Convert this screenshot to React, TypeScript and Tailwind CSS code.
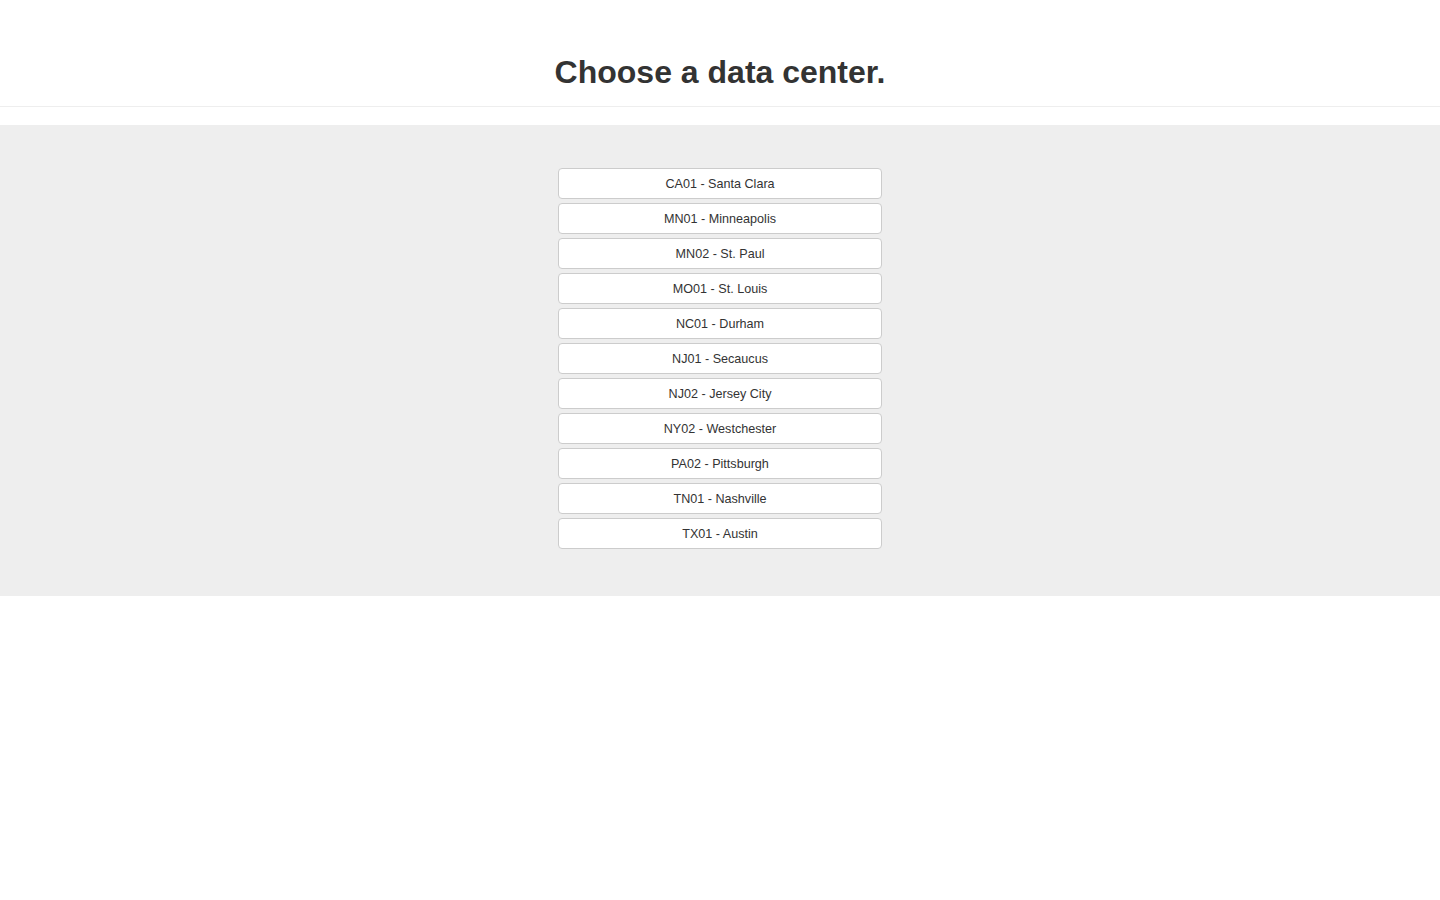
import React from "react";

const centers = [
  "CA01 - Santa Clara",
  "MN01 - Minneapolis",
  "MN02 - St. Paul",
  "MO01 - St. Louis",
  "NC01 - Durham",
  "NJ01 - Secaucus",
  "NJ02 - Jersey City",
  "NY02 - Westchester",
  "PA02 - Pittsburgh",
  "TN01 - Nashville",
  "TX01 - Austin",
];

const App: React.FC = () => {
  return (
    <div className="min-h-screen bg-white text-[#333] font-['Helvetica_Neue','Liberation_Sans',Arial,sans-serif]">
      <div className="h-[107px] border-b border-[#eee] pt-[55px]">
        <h1 className="text-center text-[32px] leading-[35px] font-bold text-[#333]">
          Choose a data center.
        </h1>
      </div>

      <div className="mt-[18px] bg-[#eee] pt-[43px] pb-[47px]">
        <div className="mx-auto flex w-[324px] flex-col gap-1">
          {centers.map((c) => (
            <button
              key={c}
              className="h-[31px] w-full rounded-[4px] border border-[#ccc] bg-white pt-[2px] text-[12.6px] text-[#333]"
            >
              {c}
            </button>
          ))}
        </div>
      </div>
    </div>
  );
};

export default App;
